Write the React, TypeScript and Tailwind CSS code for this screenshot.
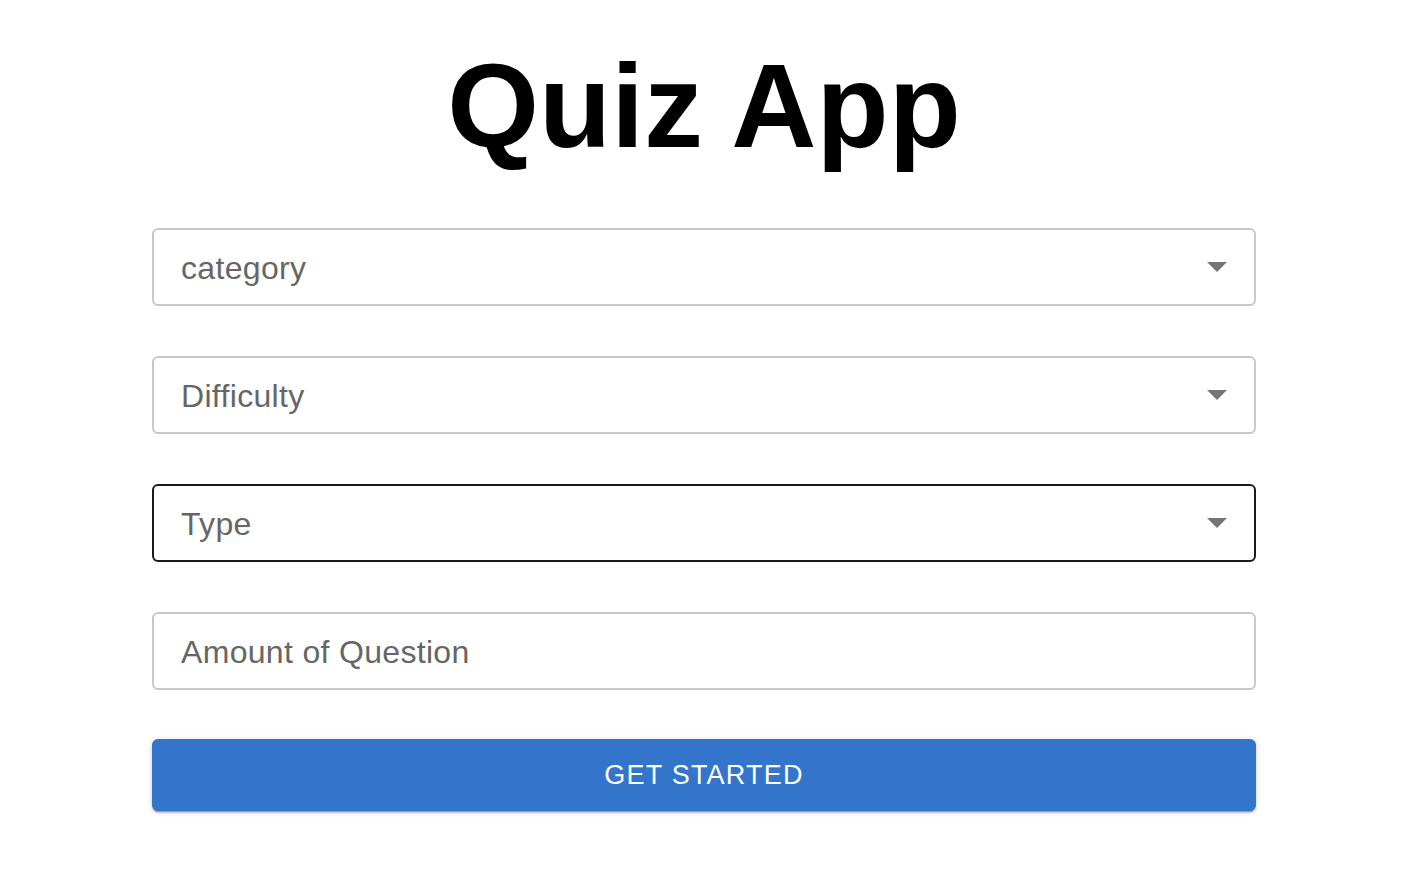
const Caret = () => (
  <svg width="20" height="10" viewBox="0 0 20 10" className="shrink-0">
    <path d="M0 0 L20 0 L10 10 Z" fill="#757575" />
  </svg>
);

const SelectField = ({ label, active }: { label: string; active?: boolean }) => (
  <div
    className={
      active
        ? "flex h-[78px] items-center justify-between rounded-[6px] border-2 border-[#1a1a1a] pl-[27px] pr-[27px]"
        : "flex h-[78px] items-center justify-between rounded-[6px] border-2 border-[#c8c8c8] pl-[27px] pr-[27px]"
    }
  >
    <span className="pt-[2px] text-[32px] tracking-[0.01em] text-[#666666]">{label}</span>
    <Caret />
  </div>
);

const App = () => {
  return (
    <div className="min-h-screen bg-white font-['Liberation_Sans',Arial,sans-serif]">
      <div className="ml-[152px] w-[1104px] pt-[31px]">
        <h1 className="text-center text-[118px] font-bold leading-[150px] text-black">
          Quiz App
        </h1>
        <div className="mt-[47px] flex flex-col gap-[50px]">
          <SelectField label="category" />
          <SelectField label="Difficulty" />
          <SelectField label="Type" active />
          <div className="flex h-[78px] items-center rounded-[6px] border-2 border-[#c8c8c8] pl-[27px]">
            <span className="pt-[2px] text-[32px] tracking-[0.01em] text-[#666666]">Amount of Question</span>
          </div>
        </div>
        <button className="mt-[49px] flex h-[72px] w-full items-center justify-center rounded-[6px] bg-[#3375cb] text-[27px] tracking-[0.045em] text-white shadow-[0_3px_1px_-2px_rgba(0,0,0,0.25),0_2px_2px_0_rgba(0,0,0,0.16),0_1px_6px_0_rgba(0,0,0,0.14)]">
          GET STARTED
        </button>
      </div>
    </div>
  );
};

export default App;
